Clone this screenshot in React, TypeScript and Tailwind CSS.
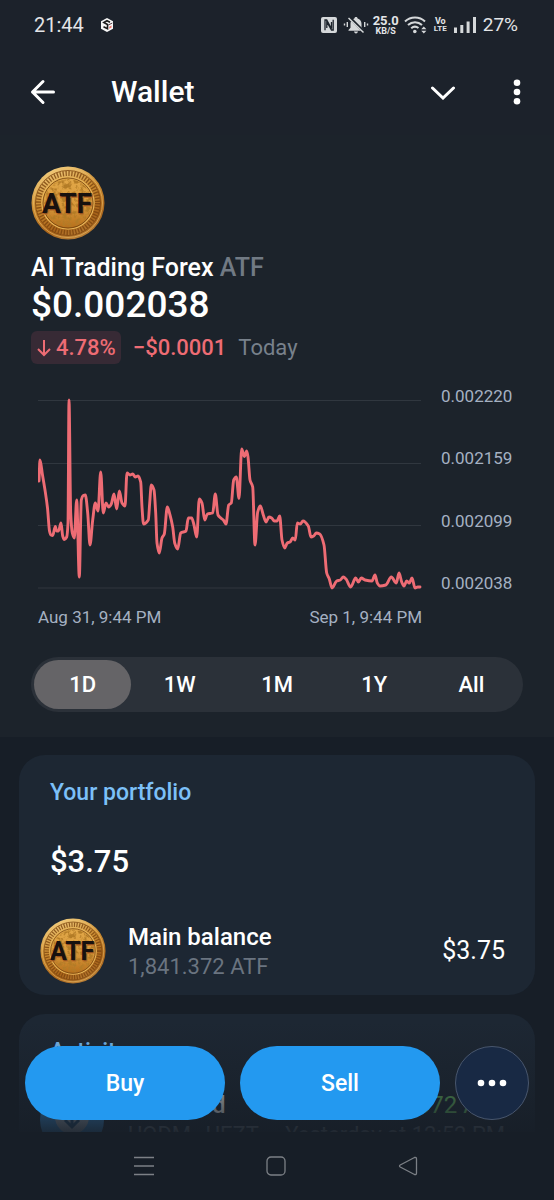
import { useId, useState } from "react"

type Point = [number, number]

const PRICE_POINTS: Point[] = [
  [39, 481], [40, 460], [42.5, 475], [45, 490], [47.5, 508], [49.5, 531], [51, 535], [52.7, 535.5],
  [55.3, 526.5], [56.7, 531], [58.5, 531], [61, 523], [62.7, 536], [64.3, 539.5], [66.7, 537], [68, 523],
  [69, 400], [70.7, 513], [72.3, 533], [74.3, 538], [76.7, 500], [79.3, 577], [81.3, 500], [83.3, 495.5],
  [85.3, 495], [87.7, 513], [90, 545], [92.7, 520], [95.3, 503], [98, 511], [100.7, 472], [103.3, 513],
  [106, 503], [108.7, 507], [111.3, 504], [114, 494], [116.7, 509], [119.3, 491], [122, 503], [125, 506],
  [127, 473], [130, 475], [132.7, 474], [135.3, 477], [138, 476], [140.7, 482], [142, 507], [143.5, 524],
  [148.3, 520], [149.7, 503], [151.3, 485], [154, 490], [155.7, 513], [157, 543], [159.3, 553], [162, 538],
  [164.3, 534], [167.3, 507], [170, 515], [172.7, 527], [174.7, 543], [177.7, 549], [180.7, 533], [186, 531],
  [188.3, 518], [191.7, 518], [194, 525], [196.7, 537], [199.3, 499], [202, 503], [204.7, 520], [207.3, 514],
  [212.7, 513], [215.3, 494], [218, 515], [220.7, 518], [223.3, 520], [226, 524], [228.7, 505], [231.3, 503],
  [233.7, 480], [236.3, 477], [239, 498.5], [241.7, 449], [244.3, 456.5], [246.7, 451], [248, 457], [250, 480],
  [252.7, 487], [255, 545], [257.7, 512], [260.3, 506], [263.3, 515], [266, 522], [269, 517], [271.7, 518],
  [274.3, 521], [277, 521], [279.7, 516], [282, 540], [284.7, 548], [287.3, 543], [290, 542], [292.7, 538],
  [295.3, 540], [297.3, 523], [300.3, 524], [303, 521], [308.3, 526], [311, 537], [313.7, 536], [316.3, 533],
  [319.7, 534], [324, 545], [326.7, 573], [329.3, 579], [332, 588], [336.7, 581], [340.3, 580], [343.3, 577],
  [346, 579], [350.7, 587], [355.7, 578], [358.3, 582], [361.3, 578], [365, 580], [372, 581], [375, 575],
  [377.3, 583], [380, 586], [385.7, 585], [391.3, 577], [396.3, 583], [399, 573], [401.7, 582], [404, 586],
  [406.7, 581], [409.3, 583], [412, 578], [415, 588], [417.7, 587], [420, 587],
]

const PRICE_LEVELS = ["0.002220", "0.002159", "0.002099", "0.002038"]
const RANGES = ["1D", "1W", "1M", "1Y", "All"]

// Monotone cubic curve, so peaks are rounded but never overshoot
function smoothPath(points: Point[]) {
  const slopes = points.slice(1).map((p, i) => (p[1] - points[i][1]) / (p[0] - points[i][0]))
  const tangents = points.map((_, i) => {
    const a = slopes[i - 1]
    const b = slopes[i]
    if (a === undefined) return b
    if (b === undefined) return a
    return a * b <= 0 ? 0 : (2 * a * b) / (a + b)
  })
  let d = `M${points[0][0]} ${points[0][1]}`
  for (let i = 1; i < points.length; i++) {
    const [x0, y0] = points[i - 1]
    const [x1, y1] = points[i]
    const h = (x1 - x0) / 3
    d += `C${x0 + h} ${y0 + tangents[i - 1] * h} ${x1 - h} ${y1 - tangents[i] * h} ${x1} ${y1}`
  }
  return d
}

function Coin({ className }: { className: string }) {
  const id = useId()
  return (
    <svg viewBox="0 0 74 74" className={className} role="img" aria-label="ATF coin">
      <defs>
        <linearGradient id={`${id}rim`} x1="0.3" y1="0" x2="0.7" y2="1">
          <stop offset="0" stopColor="#f3cf80" />
          <stop offset="0.4" stopColor="#c98a30" />
          <stop offset="0.75" stopColor="#a9641a" />
          <stop offset="1" stopColor="#b98038" />
        </linearGradient>
        <linearGradient id={`${id}face`} x1="0.5" y1="0" x2="0.5" y2="1">
          <stop offset="0" stopColor="#e2a94a" />
          <stop offset="0.55" stopColor="#d8983a" />
          <stop offset="1" stopColor="#b56e1b" />
        </linearGradient>
        <filter id={`${id}grain`} x="0" y="0" width="1" height="1">
          <feTurbulence type="fractalNoise" baseFrequency="0.22" numOctaves="3" seed="8" />
          <feColorMatrix values="0 0 0 0 0.45  0 0 0 0 0.2  0 0 0 0 0.02  4 0 0 0 -1.7" />
          <feComposite in2="SourceGraphic" operator="in" />
        </filter>
      </defs>
      <circle cx="37" cy="37" r="36.5" fill={`url(#${id}rim)`} />
      <circle cx="37" cy="37" r="34.5" fill="none" stroke="#f0c26a" strokeWidth="1" opacity="0.6" />
      <circle cx="37" cy="37" r="32.5" fill="none" stroke="#7b430d" strokeWidth="0.8" />
      <circle cx="37" cy="37" r="29.5" fill="none" stroke="#7a430e" strokeWidth="5" strokeDasharray="1.3 1.6" opacity="0.8" />
      <circle cx="37" cy="37" r="26" fill={`url(#${id}face)`} stroke="#e8b659" strokeWidth="1.2" />
      <circle cx="37" cy="37" r="25" fill="none" stroke="#70400f" strokeWidth="0.8" />
      <circle cx="37" cy="37" r="24" fill="#000" filter={`url(#${id}grain)`} />
      <g fontFamily="Roboto, sans-serif" fontSize="28" fontWeight="700" textAnchor="middle">
        <text x="37" y="48" fill="#5c2d10" stroke="#b76b28" strokeWidth="1">ATF</text>
        <text x="36" y="47" fill="#17110f">ATF</text>
      </g>
    </svg>
  )
}

function StatusBar() {
  return (
    <div className="flex h-12 items-center pt-[2px] pr-9 pl-[34px] text-[#e3e5e7]">
      <span className="text-[20px] leading-6">21:44</span>
      <svg viewBox="0 0 14 16" className="ml-4 h-4 w-[14px]">
        <path d="M7 1l6 3.3v7.4L7 15l-6-3.3V4.300z" fill="#f7f7f7" />
        <path d="M10 5.200L7 3.700 3.800 5.500 7.500 7.500v4.300L3.500 9.800" fill="none" stroke="#1b1b1b" strokeWidth="1.600" />
        <path d="M8.300 8l4-2" stroke="#40242a" strokeWidth="0.900" />
        <path d="M9.300 9.800l2.200-1.200v1.900l-2.200 1.200z" fill="#ec6a62" />
      </svg>
      <div className="ml-auto flex items-center">
        <svg viewBox="0 0 16 16" className="size-4">
          <rect width="16" height="16" rx="2" fill="#d5d8da" />
          <path d="M4 13.300V3h1.700l4.800 8.800V5M12.200 2.700v10.300h-1.700L5.800 4.800V11" fill="none" stroke="#1c232b" strokeWidth="1.300" />
        </svg>
        <svg viewBox="0 0 26 18" className="ml-[6px] h-[18px] w-[26px]">
          <path d="M13 1c1 0 1.600.6 1.600 1.500 2.500.7 3.900 2.700 3.900 5.300v4l2 2.200v.8H5.500V14l2-2.200v-4c0-2.600 1.400-4.600 3.900-5.300C11.400 1.600 12 1 13 1zM11 15.600h4c-.2 1.100-.9 1.800-2 1.800s-1.800-.7-2-1.800z" fill="#d5d8da" />
          <path d="M6.500 1.500l15 15" stroke="#1c232b" strokeWidth="3" />
          <path d="M5.500 2l15 14.500" stroke="#d5d8da" strokeWidth="1.500" />
          <path d="M4.300 6v5M1.500 7.500v2M21.700 6v5M24.500 7.500v2" stroke="#d5d8da" strokeWidth="1.400" />
        </svg>
        <div className="ml-1 flex flex-col items-center font-bold">
          <span className="text-[13px] leading-[12px]">25.0</span>
          <span className="text-[9px] leading-[9px]">KB/S</span>
        </div>
        <svg viewBox="0 0 23 18" className="ml-[5px] h-[18px] w-[23px]" fill="none" stroke="#d5d8da" strokeWidth="2">
          <path d="M1 5.500c5.500-5.300 14.500-5.300 20 0M4 9c4-3.700 10-3.700 14 0M7.200 12.300c2.200-2 5-2.100 7.300-.3" />
          <circle cx="10.800" cy="15.500" r="1.800" fill="#d5d8da" stroke="none" />
          <path d="M17.200 13.300l2.600-2.800 2.600 2.800zM17.200 14.700l2.600 2.800 2.600-2.800z" fill="#d5d8da" stroke="none" />
        </svg>
        <div className="ml-[7px] flex flex-col items-center leading-[8px] font-bold">
          <span className="text-[9px]">Vo</span>
          <span className="text-[8px]">LTE</span>
        </div>
        <svg viewBox="0 0 22 16" className="ml-[7px] h-4 w-[22px]" fill="#d5d8da">
          <rect y="10.500" width="3" height="5.500" />
          <rect x="6.300" y="8" width="3" height="8" />
          <rect x="12.600" y="4.500" width="3" height="11.500" />
          <rect x="19" width="3" height="16" />
        </svg>
        <span className="ml-[7px] text-[19px] leading-6">27%</span>
      </div>
    </div>
  )
}

function Header() {
  return (
    <header className="flex h-[87px] items-center pt-px pr-[33px] pl-[30px] text-white">
      <button type="button" aria-label="Back">
        <svg viewBox="0 0 26 26" className="size-[26px]" fill="none" stroke="currentColor" strokeWidth="3" strokeLinecap="round" strokeLinejoin="round">
          <path d="M23.500 13H2.500M13 2.500L2.500 13 13 23.500" />
        </svg>
      </button>
      <h1 className="ml-[55px] text-[30px] leading-9 font-medium">Wallet</h1>
      <button type="button" aria-label="Switch wallet" className="ml-auto">
        <svg viewBox="0 0 26 16" className="h-4 w-[26px]" fill="none" stroke="currentColor" strokeWidth="3" strokeLinecap="round">
          <path d="M2.500 4L13 14 23.500 4" />
        </svg>
      </button>
      <button type="button" aria-label="More options" className="ml-[57px]">
        <svg viewBox="0 0 8 26" className="h-[26px] w-2" fill="currentColor">
          <circle cx="4" cy="3.700" r="3.300" />
          <circle cx="4" cy="13" r="3.300" />
          <circle cx="4" cy="22.300" r="3.300" />
        </svg>
      </button>
    </header>
  )
}

function PriceChart() {
  return (
    <div className="mt-[22px] flex gap-[19px] pl-[7px]">
      <div className="min-w-0 flex-1">
        <svg viewBox="38 386 384 206" className="w-full" fill="none" role="img" aria-label="ATF price, last day">
          <path d="M38 400.500H421M38 463.500H421M38 525.500H421M38 588H421" stroke="#30373f" />
          <path d={smoothPath(PRICE_POINTS)} stroke="#ee6c74" strokeWidth="2.900" strokeLinecap="round" strokeLinejoin="round" />
        </svg>
        <div className="mt-[13px] flex justify-between text-[17px] leading-6 text-[#a5b1c2]">
          <span>Aug 31, 9:44 PM</span>
          <span>Sep 1, 9:44 PM</span>
        </div>
      </div>
      <ul className="flex h-[207px] w-[82px] flex-col justify-between text-[17px] leading-5 text-[#a5b1c2]">
        {PRICE_LEVELS.map((level) => (
          <li key={level}>{level}</li>
        ))}
      </ul>
    </div>
  )
}

function RangeTabs() {
  const [active, setActive] = useState("1D")
  return (
    <div className="mt-7 flex h-[55px] rounded-full bg-[#2b3139] p-[3px]">
      {RANGES.map((range) => (
        <button
          key={range}
          type="button"
          aria-pressed={range === active}
          onClick={() => setActive(range)}
          className={`flex-1 rounded-full text-[22px] leading-6 font-medium text-white ${range === active ? "bg-[#656467]" : ""}`}
        >
          {range}
        </button>
      ))}
    </div>
  )
}

function Portfolio() {
  return (
    <section className="mx-[19px] mt-[18px] h-60 rounded-[26px] bg-[#1d2733] pr-[30px] pl-[21px]">
      <h2 className="ml-[10px] pt-[23px] text-[23px] leading-[30px] font-medium text-[#7cc0f8]">Your portfolio</h2>
      <p className="mt-9 ml-[10px] text-[31px] leading-9 font-medium text-white">$3.75</p>
      <div className="mt-[38px] flex items-center">
        <Coin className="size-[66px]" />
        <div className="ml-[22px]">
          <h3 className="pt-px text-[24px] leading-[30px] font-medium text-white">Main balance</h3>
          <p className="text-[22px] leading-[30px] text-[#6a7480]">1,841.372 ATF</p>
        </div>
        <span className="ml-auto text-[25px] leading-8 text-white">$3.75</span>
      </div>
    </section>
  )
}

function Activity() {
  return (
    <section className="mx-[19px] mt-[19px] rounded-t-[26px] bg-[#1d2733] pr-[30px] pl-[21px]">
      <h2 className="ml-[10px] pt-[23px] text-[23px] leading-[30px] font-medium text-[#7cc0f8]">Activity</h2>
      <div className="mt-[21px] flex items-center">
        <svg viewBox="0 0 64 64" className="mr-6 size-16 shrink-0">
          <circle cx="32" cy="32" r="32" fill="#3d9ff0" />
          <circle cx="32" cy="29" r="17" fill="#b4c3d2" />
          <path d="M32 20v19M25 32l7 7 7-7" fill="none" stroke="#245783" strokeWidth="3" />
        </svg>
        <div className="min-w-0 flex-1">
          <div className="flex justify-between text-[24px] leading-[30px]">
            <h3 className="font-medium text-white">Received</h3>
            <span className="text-[#68bd62]">+1,841.372 ATF</span>
          </div>
          <div className="flex justify-between text-[22px] leading-[30px] whitespace-nowrap text-[#7d8792]">
            <span>UQDM…UEZT</span>
            <span>Yesterday at 12:52 PM</span>
          </div>
        </div>
      </div>
    </section>
  )
}

function ActionBar() {
  return (
    <div className="absolute inset-x-0 bottom-0 flex gap-[15px] bg-linear-to-b from-[#171e27]/0 via-[#171e27]/50 via-60% to-[#171e27]/90 px-[25px] pt-6 pb-3">
      <button type="button" className="h-[74px] flex-1 rounded-full bg-[#2399f0] pt-[2px] text-[23px] font-medium text-white">
        Buy
      </button>
      <button type="button" className="h-[74px] flex-1 rounded-full bg-[#2399f0] pt-[2px] text-[23px] font-medium text-white">
        Sell
      </button>
      <button
        type="button"
        aria-label="More actions"
        className="flex size-[74px] items-center justify-center rounded-full border border-[#48566d] bg-[#182944]"
      >
        <svg viewBox="0 0 30 8" className="h-2 w-[30px]" fill="#fff">
          <circle cx="4" cy="4" r="3.300" />
          <circle cx="15" cy="4" r="3.300" />
          <circle cx="26" cy="4" r="3.300" />
        </svg>
      </button>
    </div>
  )
}

function SystemNav() {
  return (
    <nav className="flex h-[68px] items-center justify-center gap-28 pr-[2px] text-[#7c8086]">
      <button type="button" aria-label="Recent apps">
        <svg viewBox="0 0 20 20" className="size-5" fill="none" stroke="currentColor" strokeWidth="1.500">
          <path d="M0 1.500h20M0 10h20M0 18.500h20" />
        </svg>
      </button>
      <button type="button" aria-label="Home">
        <svg viewBox="0 0 20 20" className="size-5" fill="none" stroke="currentColor" strokeWidth="1.300">
          <rect x="1" y="1" width="18" height="18" rx="4" />
        </svg>
      </button>
      <button type="button" aria-label="Back">
        <svg viewBox="0 0 20 20" className="size-5" fill="none" stroke="currentColor" strokeWidth="1.300" strokeLinejoin="round">
          <path d="M16.500 1.500L2.200 9Q.8 10 2.200 11l14.300 7.500Q18.500 19 18.500 17V3Q18.500 1 16.500 1.500z" />
        </svg>
      </button>
    </nav>
  )
}

export default function App() {
  return (
    <div className="flex h-screen flex-col overflow-hidden bg-[#171e27] font-[Roboto,sans-serif]">
      <div className="bg-[#1c222b]">
        <StatusBar />
        <Header />
      </div>
      <main className="relative min-h-0 flex-1 overflow-hidden">
        <section className="bg-[#1c232b] px-[31px] pt-[31px] pb-[25px]">
          <Coin className="size-[74px]" />
          <h2 className="mt-[13px] text-[25px] leading-[30px] font-medium text-white">
            AI Trading Forex <span className="text-[#717a84]">ATF</span>
          </h2>
          <p className="text-[37px] leading-[44px] font-medium text-white">$0.002038</p>
          <div className="mt-1 flex items-center text-[22px] leading-[30px]">
            <span className="flex h-[33px] items-center gap-1 rounded-md bg-[#372a35] px-[5px] font-medium text-[#ee6c74]">
              <svg viewBox="0 0 16 18" className="h-[18px] w-4" fill="none" stroke="currentColor" strokeWidth="2">
                <path d="M8 1v15M2 10l6 6 6-6" />
              </svg>
              4.78%
            </span>
            <span className="ml-3 font-medium text-[#ee6c74]">−$0.0001</span>
            <span className="ml-3 text-[#78818b]">Today</span>
          </div>
          <PriceChart />
          <RangeTabs />
        </section>
        <Portfolio />
        <Activity />
        <ActionBar />
      </main>
      <SystemNav />
    </div>
  )
}
